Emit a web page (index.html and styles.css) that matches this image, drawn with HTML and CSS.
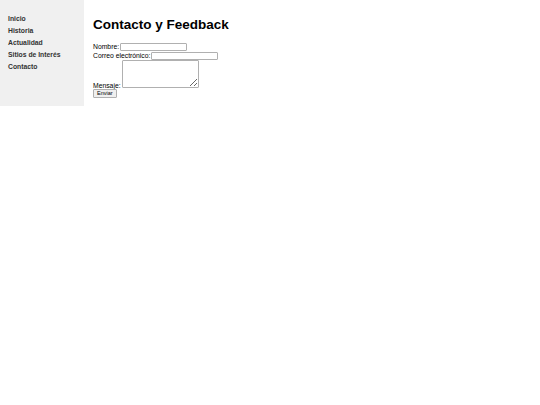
FILE: index.html
```html
<!DOCTYPE html>
<html lang="es">
<head>
<meta charset="utf-8">
<title>Contacto y Feedback</title>
<link rel="stylesheet" href="styles.css">
</head>
<body>
<div class="layout">
  <nav class="sidebar">
    <ul class="nav">
      <li><a href="#">Inicio</a></li>
      <li><a href="#">Historia</a></li>
      <li><a href="#">Actualidad</a></li>
      <li><a href="#">Sitios de Interés</a></li>
      <li><a href="#">Contacto</a></li>
    </ul>
  </nav>
  <main class="content">
    <h1 class="title">Contacto y Feedback</h1>
    <form class="form">
      <div class="row"><label>Nombre:</label><input type="text" class="field"></div>
      <div class="row"><label>Correo electrónico:</label><input type="email" class="field"></div>
      <div class="row row-area"><label>Mensaje:</label><textarea class="area"></textarea></div>
      <div class="row"><button type="submit" class="btn">Enviar</button></div>
    </form>
  </main>
</div>
</body>
</html>
```
FILE: styles.css
```css
html, body {
  margin: 0;
  padding: 0;
  background: #fff;
}
body {
  font-family: "Liberation Sans", Arial, sans-serif;
  font-size: 6.8px;
  color: #000;
}
.layout {
  display: flex;
  align-items: flex-start;
}
.sidebar {
  width: 84px;
  height: 106px;
  background: #f0f0f0;
  box-sizing: border-box;
  padding: 13px 0 0 8px;
  flex-shrink: 0;
}
.nav {
  list-style: none;
  margin: 0;
  padding: 0;
}
.nav li {
  line-height: 12px;
}
.nav a {
  color: #333;
  text-decoration: none;
  font-weight: bold;
}
.content {
  padding-left: 9px;
}
.title {
  font-size: 13.5px;
  font-weight: bold;
  margin: 16px 0 8px;
  line-height: 18px;
}
.form {
  margin: 0;
  display: flex;
  flex-direction: column;
}
.row {
  display: flex;
  align-items: center;
  gap: 1px;
  height: 9px;
  line-height: 9px;
}
.row-area {
  height: 29px;
  align-items: flex-end;
}
.row-area label {
  line-height: 7px;
}
.field {
  width: 67px;
  height: 8px;
  box-sizing: border-box;
  border: 1px solid #b0b0b0;
  border-radius: 1px;
  padding: 0 1px;
  margin: 0;
  font-size: 6px;
}
.area {
  width: 77px;
  height: 28px;
  box-sizing: border-box;
  border: 1px solid #b0b0b0;
  border-radius: 1px;
  margin: 0 0 1px 0;
  padding: 1px;
  font-size: 6px;
}
.btn {
  font-family: "Liberation Sans", Arial, sans-serif;
  font-size: 5.5px;
  height: 9px;
  padding: 0 3px;
  margin: 0;
  border: 1px solid #b0b0b0;
  border-radius: 1px;
  background: #efefef;
  line-height: 7px;
  color: #000;
}
```
